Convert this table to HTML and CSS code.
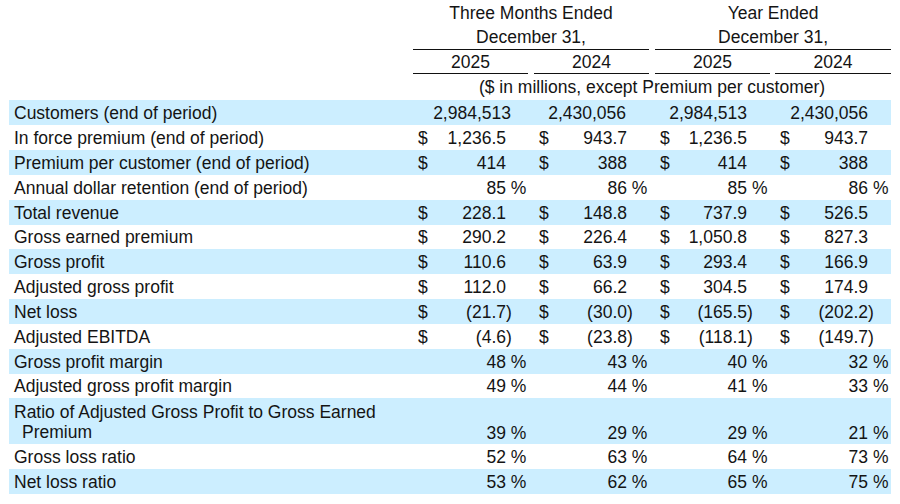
FILE: index.html
```html
<!DOCTYPE html>
<html lang="en">
<head>
<meta charset="utf-8">
<title>Key Operating Metrics</title>
<link rel="stylesheet" href="styles.css">
</head>
<body>
<div class="wrap">
<table class="fin">
<colgroup>
<col class="w-label">
<col class="w-cur"><col class="w-num"><col class="w-suf"><col class="w-sp">
<col class="w-cur"><col class="w-num"><col class="w-suf"><col class="w-sp">
<col class="w-cur"><col class="w-num2"><col class="w-suf2"><col class="w-sp2">
<col class="w-cur"><col class="w-num"><col class="w-suf2">
</colgroup>
<thead>
<tr class="h1"><td></td><td colspan="7" class="c">Three Months Ended</td><td></td><td colspan="7" class="c">Year Ended</td></tr>
<tr class="h2"><td></td><td colspan="7" class="c ul">December 31,</td><td></td><td colspan="7" class="c ul">December 31,</td></tr>
<tr class="h3"><td></td><td colspan="3" class="c ul">2025</td><td></td><td colspan="3" class="c ul">2024</td><td></td><td colspan="3" class="c ul">2025</td><td></td><td colspan="3" class="c ul">2024</td></tr>
<tr class="h4"><td></td><td colspan="15" class="c">($ in millions, except Premium per customer)</td></tr>
</thead>
<tbody>
<tr class="sh"><td class="lbl">Customers (end of period)</td><td colspan="3" class="cnt cnt-a">2,984,513</td><td></td><td colspan="3" class="cnt">2,430,056</td><td></td><td colspan="3" class="cnt">2,984,513</td><td></td><td colspan="3" class="cnt">2,430,056</td></tr>
<tr><td class="lbl">In force premium (end of period)</td><td class="cur">$</td><td class="num">1,236.5</td><td></td><td></td><td class="cur">$</td><td class="num">943.7</td><td></td><td></td><td class="cur">$</td><td class="num">1,236.5</td><td></td><td></td><td class="cur">$</td><td class="num">943.7</td><td></td></tr>
<tr class="sh"><td class="lbl">Premium per customer (end of period)</td><td class="cur">$</td><td class="num">414</td><td></td><td></td><td class="cur">$</td><td class="num">388</td><td></td><td></td><td class="cur">$</td><td class="num">414</td><td></td><td></td><td class="cur">$</td><td class="num">388</td><td></td></tr>
<tr><td class="lbl">Annual dollar retention (end of period)</td><td></td><td class="num">85</td><td class="suf">&nbsp;%</td><td></td><td></td><td class="num">86</td><td class="suf">&nbsp;%</td><td></td><td></td><td class="num">85</td><td class="suf">&nbsp;%</td><td></td><td></td><td class="num">86</td><td class="suf">&nbsp;%</td></tr>
<tr class="sh"><td class="lbl">Total revenue</td><td class="cur">$</td><td class="num">228.1</td><td></td><td></td><td class="cur">$</td><td class="num">148.8</td><td></td><td></td><td class="cur">$</td><td class="num">737.9</td><td></td><td></td><td class="cur">$</td><td class="num">526.5</td><td></td></tr>
<tr class="r24"><td class="lbl">Gross earned premium</td><td class="cur">$</td><td class="num">290.2</td><td></td><td></td><td class="cur">$</td><td class="num">226.4</td><td></td><td></td><td class="cur">$</td><td class="num">1,050.8</td><td></td><td></td><td class="cur">$</td><td class="num">827.3</td><td></td></tr>
<tr class="sh"><td class="lbl">Gross profit</td><td class="cur">$</td><td class="num">110.6</td><td></td><td></td><td class="cur">$</td><td class="num">63.9</td><td></td><td></td><td class="cur">$</td><td class="num">293.4</td><td></td><td></td><td class="cur">$</td><td class="num">166.9</td><td></td></tr>
<tr><td class="lbl">Adjusted gross profit</td><td class="cur">$</td><td class="num">112.0</td><td></td><td></td><td class="cur">$</td><td class="num">66.2</td><td></td><td></td><td class="cur">$</td><td class="num">304.5</td><td></td><td></td><td class="cur">$</td><td class="num">174.9</td><td></td></tr>
<tr class="sh"><td class="lbl">Net loss</td><td class="cur">$</td><td class="num">(21.7</td><td class="suf">)</td><td></td><td class="cur">$</td><td class="num">(30.0</td><td class="suf">)</td><td></td><td class="cur">$</td><td class="num">(165.5</td><td class="suf">)</td><td></td><td class="cur">$</td><td class="num">(202.2</td><td class="suf">)</td></tr>
<tr><td class="lbl">Adjusted EBITDA</td><td class="cur">$</td><td class="num">(4.6</td><td class="suf">)</td><td></td><td class="cur">$</td><td class="num">(23.8</td><td class="suf">)</td><td></td><td class="cur">$</td><td class="num">(118.1</td><td class="suf">)</td><td></td><td class="cur">$</td><td class="num">(149.7</td><td class="suf">)</td></tr>
<tr class="sh"><td class="lbl">Gross profit margin</td><td></td><td class="num">48</td><td class="suf">&nbsp;%</td><td></td><td></td><td class="num">43</td><td class="suf">&nbsp;%</td><td></td><td></td><td class="num">40</td><td class="suf">&nbsp;%</td><td></td><td></td><td class="num">32</td><td class="suf">&nbsp;%</td></tr>
<tr class="r24"><td class="lbl">Adjusted gross profit margin</td><td></td><td class="num">49</td><td class="suf">&nbsp;%</td><td></td><td></td><td class="num">44</td><td class="suf">&nbsp;%</td><td></td><td></td><td class="num">41</td><td class="suf">&nbsp;%</td><td></td><td></td><td class="num">33</td><td class="suf">&nbsp;%</td></tr>
<tr class="sh tall"><td class="lbl lbl-wrap">Ratio of Adjusted Gross Profit to Gross Earned<br>Premium</td><td></td><td class="num">39</td><td class="suf">&nbsp;%</td><td></td><td></td><td class="num">29</td><td class="suf">&nbsp;%</td><td></td><td></td><td class="num">29</td><td class="suf">&nbsp;%</td><td></td><td></td><td class="num">21</td><td class="suf">&nbsp;%</td></tr>
<tr><td class="lbl">Gross loss ratio</td><td></td><td class="num">52</td><td class="suf">&nbsp;%</td><td></td><td></td><td class="num">63</td><td class="suf">&nbsp;%</td><td></td><td></td><td class="num">64</td><td class="suf">&nbsp;%</td><td></td><td></td><td class="num">73</td><td class="suf">&nbsp;%</td></tr>
<tr class="sh"><td class="lbl">Net loss ratio</td><td></td><td class="num">53</td><td class="suf">&nbsp;%</td><td></td><td></td><td class="num">62</td><td class="suf">&nbsp;%</td><td></td><td></td><td class="num">65</td><td class="suf">&nbsp;%</td><td></td><td></td><td class="num">75</td><td class="suf">&nbsp;%</td></tr>
</tbody>
</table>
</div>
</body>
</html>
```

FILE: styles.css
```css
html, body {
  margin: 0;
  padding: 0;
  background: #ffffff;
}

body {
  font-family: "Liberation Sans", Arial, sans-serif;
  font-size: 17.5px;
  color: #141414;
}

.wrap {
  padding-left: 9px;
}

.fin {
  width: 882px;
  table-layout: fixed;
  border-collapse: separate;
  border-spacing: 0;
}

.w-label { width: 404px; }
.w-cur { width: 19px; }
.w-num { width: 74px; }
.w-num2 { width: 73px; }
.w-suf { width: 22px; }
.w-suf2 { width: 23px; }
.w-sp { width: 6px; }
.w-sp2 { width: 5px; }

.fin td {
  padding: 0;
  line-height: 20px;
  white-space: nowrap;
  vertical-align: middle;
}

.fin .c {
  text-align: center;
}

.fin .ul {
  border-bottom: 1px solid #111;
}

.h1 { height: 25px; }
.h2 { height: 25px; }
.h3 { height: 24px; }
.h4 { height: 26px; }

tbody tr {
  height: 25px;
}

tbody tr.r24 {
  height: 24px;
}

tbody tr.sh {
  background: #cceeff;
}

.fin .lbl {
  padding-left: 5px;
}

.fin .cur {
  padding-left: 5px;
}

.fin .num {
  text-align: right;
}

.fin .suf {
  text-align: left;
}

.fin .cnt {
  text-align: right;
  padding-right: 23px;
}

.fin .cnt.cnt-a {
  padding-right: 17px;
}

tbody tr.tall {
  height: 46px;
}

tbody tr.tall td {
  vertical-align: bottom;
  padding-bottom: 1px;
}

.fin .lbl-wrap {
  white-space: normal;
  padding-top: 4px;
  padding-bottom: 2px;
  padding-left: 13px;
  text-indent: -8px;
}
```
